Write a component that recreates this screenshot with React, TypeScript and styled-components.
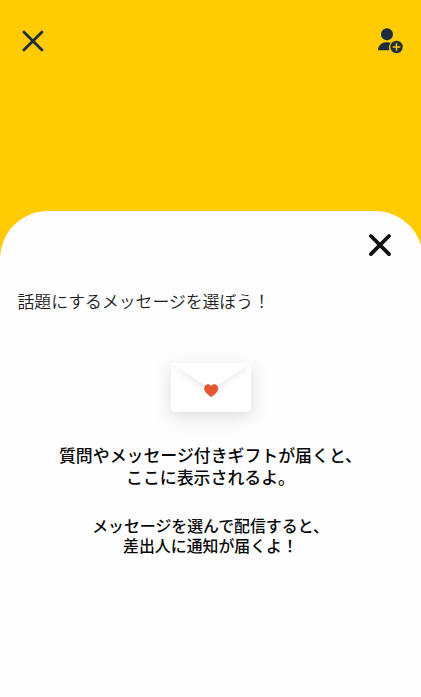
import React from 'react'
import styled, {createGlobalStyle} from "styled-components";

const GlobalStyle = createGlobalStyle`
  body {
    margin: 0;
    font-family: "Liberation Sans", "Noto Sans CJK JP", sans-serif;
  }
`

const Screen = styled('div')`
    display: flex;
    flex-direction: column;
    height: 697px;
    background: #ffcc03;
    overflow: hidden;
`

const Header = styled('header')`
    display: flex;
    justify-content: space-between;
    height: 183px;
    padding: 28px 18px 0 22px;
`

const IconButton = styled('button')<{ color: string }>`
    width: ${p => p.color === '#111111' ? 24 : 26}px;
    height: 26px;
    padding: 0;
    border: 0;
    background: none;
    color: ${p => p.color};
    cursor: pointer;

    svg {
        display: block;
        overflow: visible;
    }
`

const Sheet = styled('section')`
    flex: 1;
    margin-right: -2px;
    padding: 21px 2px 0 0;
    border-radius: 48px 48px 0 0;
    background: #fefefe;
`

const SheetTop = styled('div')`
    display: flex;
    justify-content: flex-end;
    padding-right: 28px;
`

const Title = styled('h1')`
    margin: 31px 0 0 17.5px;
    font-family: "Noto Sans CJK JP", sans-serif;
    font-size: 16.85px;
    font-weight: 350;
    line-height: 24px;
    color: #1c1c1c;
`

const Envelope = styled('svg')`
    display: block;
    margin: 49px auto 0;
    overflow: visible;
`

const Message = styled('p')<{ size: number; top: number; leading: number }>`
    margin: ${p => p.top}px 0 0;
    font-size: ${p => p.size}px;
    font-weight: 500;
    line-height: ${p => p.leading}px;
    text-align: center;
    white-space: nowrap;
    color: #080808;
`

function CloseIcon(props: { weight: number }) {
    return (
        <svg width="22" height="26" viewBox="0 0 22 26" fill="none" stroke="currentColor"
             strokeWidth={props.weight} strokeLinecap="round">
            <path d="M1.9 4 20 22.1M20 4 1.9 22.1"/>
        </svg>
    )
}

function AddUserIcon() {
    return (
        <svg width="26" height="26" viewBox="0 0 26 26" fill="currentColor">
            <circle cx="10" cy="6.2" r="6"/>
            <path d="M.8 22.2C1.4 17.2 4.7 14.2 9.6 14.2c1.6 0 2.9.2 4.1.6a7.5 7.5 0 0 0-1.2 7.4z"/>
            <circle cx="19.5" cy="19" r="6.2"/>
            <path d="M19.5 15.2v7.6M15.7 19h7.6" stroke="#ffcc03" strokeWidth="1.5"/>
        </svg>
    )
}

function Letter() {
    return (
        <Envelope width="82" height="50" viewBox="0 0 82 50">
            <defs>
                <filter id="shadow" x="-50%" y="-60%" width="200%" height="260%">
                    <feDropShadow dx="0" dy="5" stdDeviation="9" floodColor="#000" floodOpacity=".14"/>
                </filter>
                <filter id="fold" x="-20%" y="-20%" width="140%" height="160%">
                    <feGaussianBlur stdDeviation="4"/>
                </filter>
                <clipPath id="paper">
                    <path d="M1 1h80v44.5a4 4 0 0 1-4 4H5a4 4 0 0 1-4-4z"/>
                </clipPath>
            </defs>
            <path filter="url(#shadow)" fill="#fff" d="M1 1h80v44.5a4 4 0 0 1-4 4H5a4 4 0 0 1-4-4z"/>
            <g clipPath="url(#paper)">
                <path filter="url(#fold)" fill="#000" opacity=".11" d="M3 2 37 27q4 3 8 0L79 2z"/>
                <path fill="#fff" d="M1 1 37 25q4 3 8 0L81 1z"/>
            </g>
            <path fill="#e65632" stroke="#cf482c" strokeWidth=".5"
                  d="M41.2 34.7C37.2 32.2 34.5 29.6 34.5 26.5c0-4.2 5-5.3 6.7-2 1.7-3.3 6.7-2.2 6.7 2 0 3.1-2.7 5.7-6.7 8.2z"/>
        </Envelope>
    )
}

export default function App() {
    return (
        <Screen>
            <GlobalStyle/>
            <Header>
                <IconButton color="#1e2d3b" aria-label="閉じる"><CloseIcon weight={2.8}/></IconButton>
                <IconButton color="#1e2d3b" aria-label="友だちを追加"><AddUserIcon/></IconButton>
            </Header>
            <Sheet>
                <SheetTop>
                    <IconButton color="#111111" aria-label="閉じる"><CloseIcon weight={3.8}/></IconButton>
                </SheetTop>
                <Title>話題にするメッセージを選ぼう！</Title>
                <Letter/>
                <Message size={16.9} top={34} leading={22}>
                    質問やメッセージ付きギフトが届くと、<br/>
                    ここに表示されるよ。
                </Message>
                <Message size={15.9} top={27} leading={20}>
                    メッセージを選んで配信すると、<br/>
                    差出人に通知が届くよ！
                </Message>
            </Sheet>
        </Screen>
    )
}
